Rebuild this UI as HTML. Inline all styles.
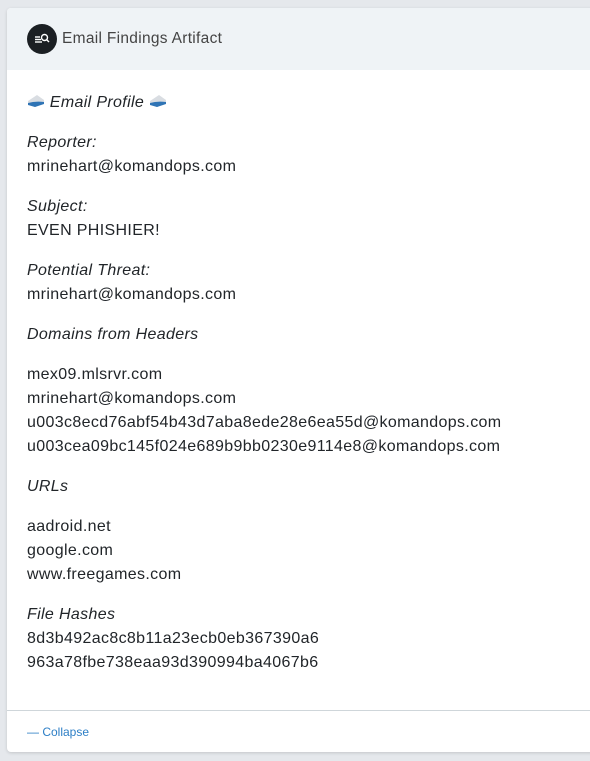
<!DOCTYPE html><html><head><style>
body{margin:0;width:590px;height:761px;background:#e5e8ec;font-family:"Liberation Sans",sans-serif;overflow:hidden;position:relative}
.card{position:absolute;left:7px;top:8px;width:600px;height:744px;background:#fff;border-radius:4px;box-shadow:0 1px 3px rgba(0,0,0,.15)}
.hd{position:absolute;left:0;top:0;right:0;height:62px;background:#eff3f6;border-radius:4px 4px 0 0}
.ic{position:absolute;left:20px;top:16px;width:30px;height:30px;border-radius:50%;background:#1b1f23}
.ttl{position:absolute;left:55px;top:21px;font-size:15.5px;color:#444;line-height:20px;letter-spacing:.3px}
.l{position:absolute;left:20px;font-size:16px;line-height:24px;color:#212529;white-space:nowrap;letter-spacing:.35px}
.i{font-style:italic}
.div{position:absolute;left:0;right:0;top:702px;border-top:1px solid #cfd6da}
.col{position:absolute;left:20px;top:716px;font-size:12px;color:#2d7fc6;line-height:16px}
.env{display:inline-block;width:18px;height:14px;vertical-align:-1px}
</style></head><body><div class="card">
<div class="hd"><div class="ic"><svg width="30" height="30" viewBox="0 0 30 30"><g stroke="#fff" stroke-width="1.4" fill="none"><line x1="8" y1="13" x2="13" y2="13"/><line x1="8" y1="15.5" x2="14" y2="15.5"/><line x1="8" y1="18" x2="15" y2="18"/><circle cx="17.5" cy="13.5" r="3"/><line x1="19.7" y1="15.7" x2="22" y2="18"/></g></svg></div><div class="ttl">Email Findings Artifact</div></div>
<div class="l i" style="top:83px"><svg class="env" viewBox="0 0 18 14"><path d="M1 7 L10 1 L17 6 L17 9 L8 13 L1 10Z" fill="#d9dde2"/><path d="M1 9 Q8 7 17 8 L17 10 L8 13 L1 11Z" fill="#2f74b5"/></svg> Email Profile <svg class="env" viewBox="0 0 18 14"><path d="M1 7 L10 1 L17 6 L17 9 L8 13 L1 10Z" fill="#d9dde2"/><path d="M1 9 Q8 7 17 8 L17 10 L8 13 L1 11Z" fill="#2f74b5"/></svg></div>
<div class="l i" style="top:123px">Reporter:</div>
<div class="l" style="top:147px">mrinehart@komandops.com</div>
<div class="l i" style="top:187px">Subject:</div>
<div class="l" style="top:211px">EVEN PHISHIER!</div>
<div class="l i" style="top:251px">Potential Threat:</div>
<div class="l" style="top:275px">mrinehart@komandops.com</div>
<div class="l i" style="top:315px">Domains from Headers</div>
<div class="l" style="top:355px">mex09.mlsrvr.com</div>
<div class="l" style="top:379px">mrinehart@komandops.com</div>
<div class="l" style="top:403px">u003c8ecd76abf54b43d7aba8ede28e6ea55d@komandops.com</div>
<div class="l" style="top:427px">u003cea09bc145f024e689b9bb0230e9114e8@komandops.com</div>
<div class="l i" style="top:467px">URLs</div>
<div class="l" style="top:507px">aadroid.net</div>
<div class="l" style="top:531px">google.com</div>
<div class="l" style="top:555px">www.freegames.com</div>
<div class="l i" style="top:595px">File Hashes</div>
<div class="l" style="top:619px">8d3b492ac8c8b11a23ecb0eb367390a6</div>
<div class="l" style="top:643px">963a78fbe738eaa93d390994ba4067b6</div>
<div class="div"></div>
<div class="col">— Collapse</div>
</div></body></html>
